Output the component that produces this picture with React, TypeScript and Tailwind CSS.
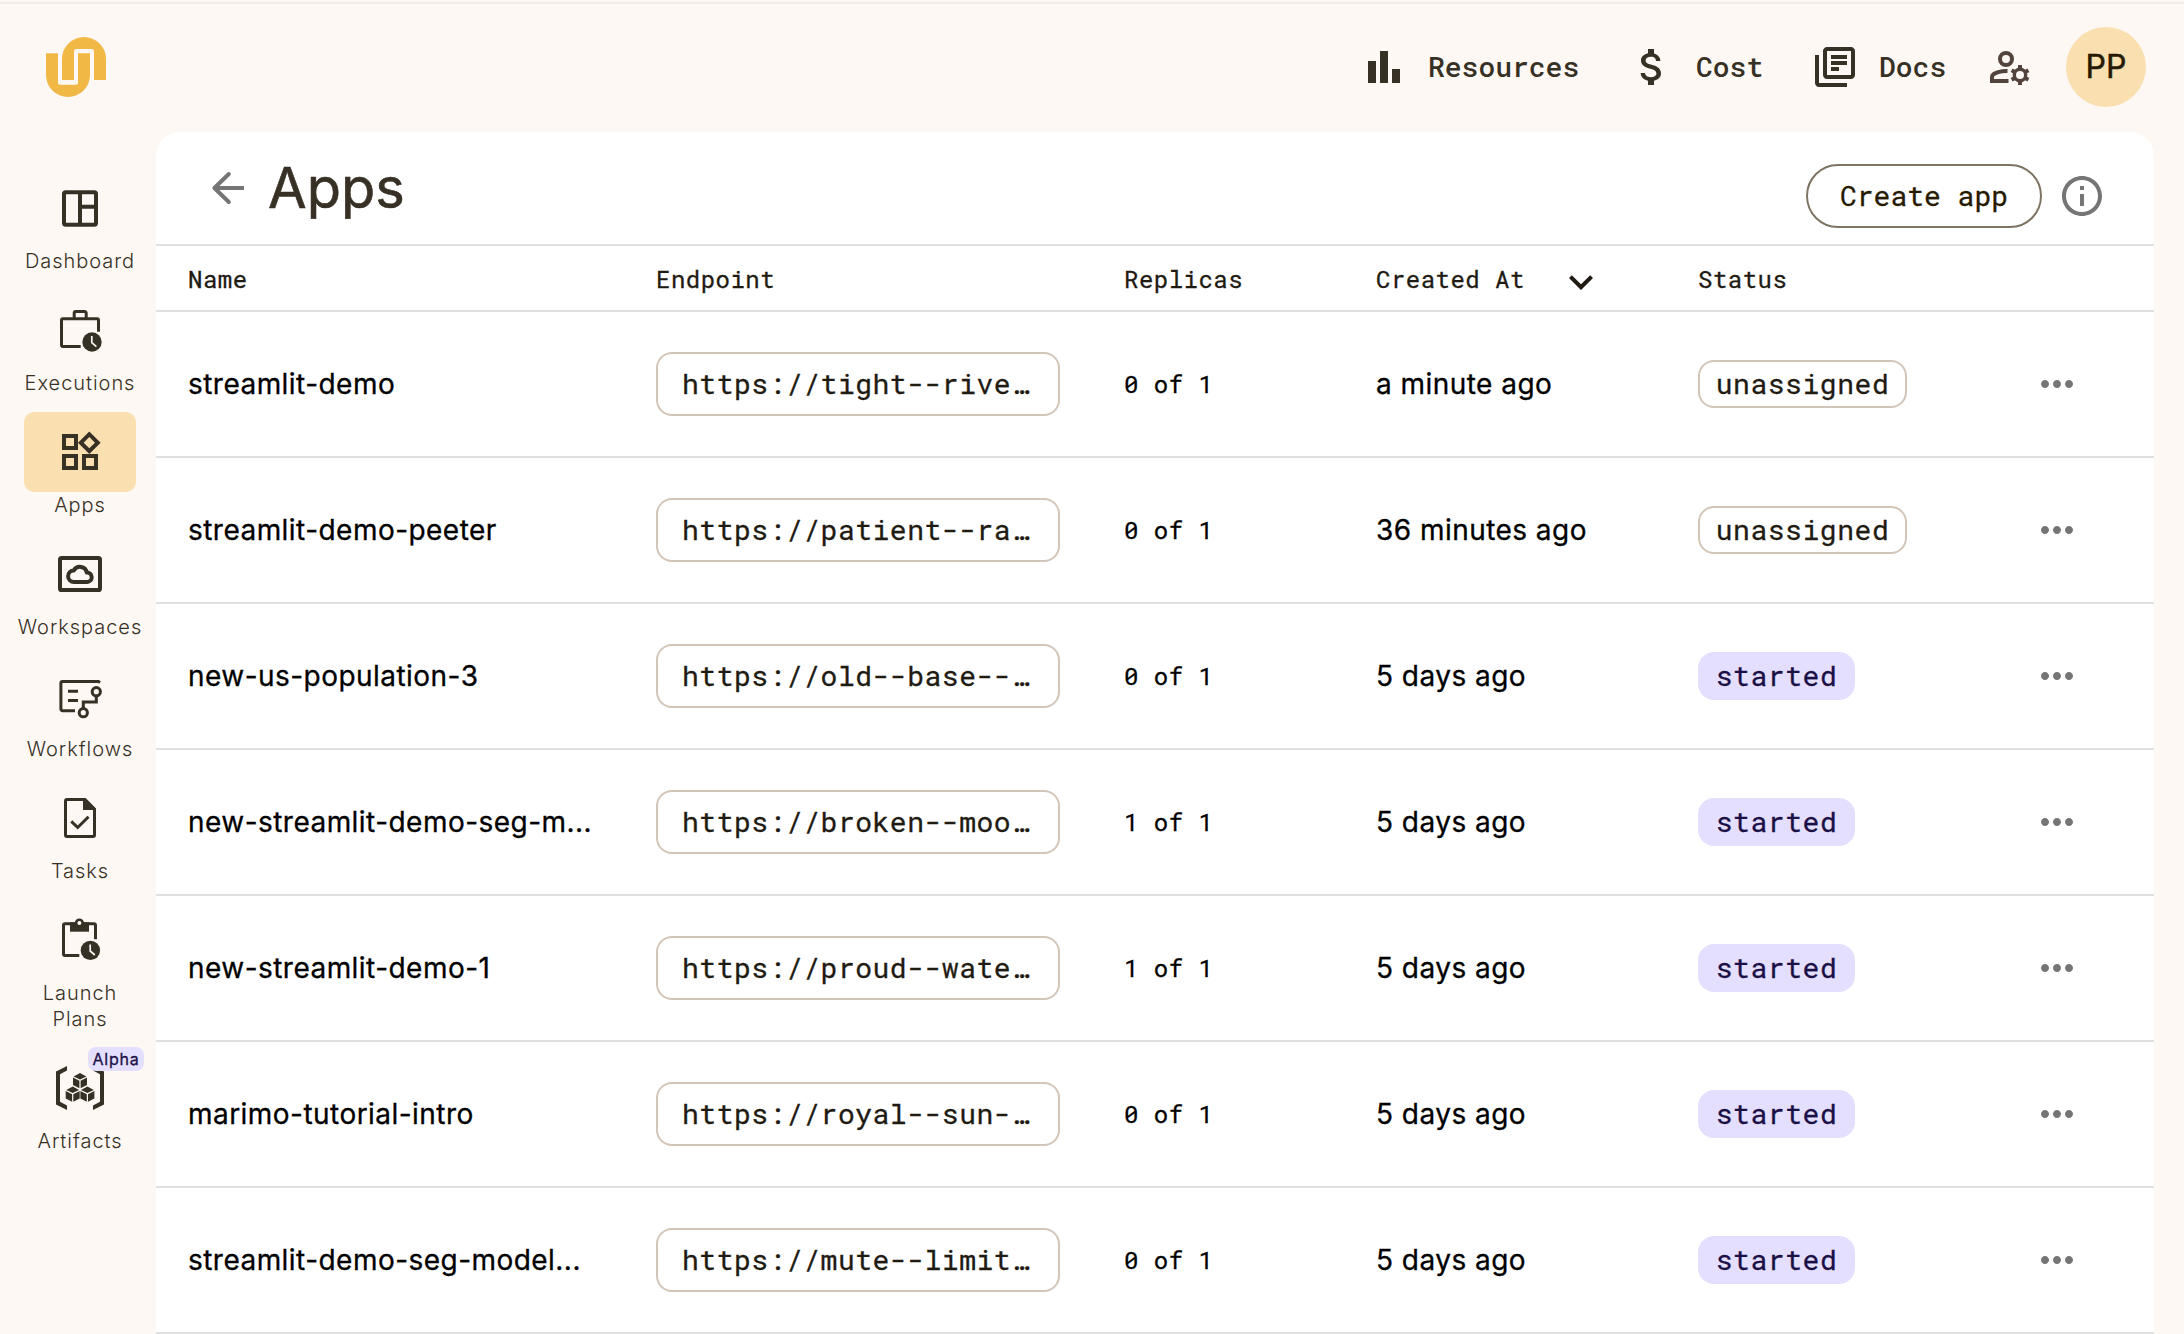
import React from "react";
import {
  MdAttachMoney,
  MdBarChart,
  MdExpandMore,
  MdMoreHoriz,
  MdOutlineInfo,
  MdOutlineLibraryBooks,
  MdOutlineWidgets,
} from "react-icons/md";

const MONO = "font-['Roboto_Mono','DejaVu_Sans_Mono',monospace]";
const INK = "#373025";

function Logo() {
  return (
    <svg className="h-[60px] w-[60px]" viewBox="0 0 60 60" fill="#f2b846">
      <path d="M0 16.3H12V45.7a2 2 0 0 0 2 2H30a2 2 0 0 0 2-2V16.3H44V38A22 22 0 0 1 0 38Z" />
      <path d="M16 43V22A22 22 0 0 1 60 22V43H48V14a2 2 0 0 0-2-2H30a2 2 0 0 0-2 2V43Z" />
    </svg>
  );
}

function NavSvg({ children }: { children: React.ReactNode }) {
  return (
    <svg className="h-12 w-12 overflow-visible" viewBox="0 0 48 48" fill="none" stroke={INK} strokeWidth="3">
      {children}
    </svg>
  );
}

function DashboardIcon() {
  return (
    <NavSvg>
      <g strokeWidth="4">
        <rect x="8" y="8.3" width="32" height="32.4" rx="1.6" />
        <path d="M24 8V40.5M24 22.7H40" />
      </g>
    </NavSvg>
  );
}

function Clock({ x, y }: { x: number; y: number }) {
  return (
    <g transform={`translate(${x} ${y})`}>
      <circle r="9.7" fill={INK} stroke="none" />
      <path d="M-.2-6V.6L4.4 4.6" stroke="#fef8f4" strokeWidth="1.7" />
    </g>
  );
}

function ExecutionsIcon() {
  return (
    <NavSvg>
      <path d="M42.5 25.7V14.3a1.5 1.5 0 0 0-1.5-1.5H7a1.5 1.5 0 0 0-1.5 1.5V39a1.5 1.5 0 0 0 1.5 1.5H24.7" />
      <path d="M18.2 12V7a1.5 1.5 0 0 1 1.5-1.5H28.7A1.5 1.5 0 0 1 30.2 7V12" />
      <Clock x={36} y={36} />
    </NavSvg>
  );
}

function WorkspacesIcon() {
  return (
    <NavSvg>
      <g strokeWidth="4">
        <rect x="4" y="8" width="40" height="32" rx="1.6" />
        <path d="M18 32a5.8 5.8 0 0 1-.2-11.6a7 7 0 0 1 13 2.2a4.7 4.7 0 0 1 .4 9.4z" strokeLinejoin="round" />
      </g>
    </NavSvg>
  );
}

function WorkflowsIcon() {
  return (
    <NavSvg>
      <path d="M44 10.6L42.6 9.6H6.5A1.6 1.6 0 0 0 4.9 11.2V37.1a1.6 1.6 0 0 0 1.6 1.6H19" />
      <path d="M12 19.3H22M12 28.5H22" />
      <circle cx="40.3" cy="19.7" r="4.1" />
      <circle cx="27.3" cy="40.7" r="4.1" />
      <path d="M40.3 24V30H27.3V36.6" />
    </NavSvg>
  );
}

function TasksIcon() {
  return (
    <NavSvg>
      <path d="M11 5.5H29L38.5 15V41a1.5 1.5 0 0 1-1.5 1.5H11A1.5 1.5 0 0 1 9.5 41V7A1.5 1.5 0 0 1 11 5.5Z" />
      <path d="M27 5H30L40 15V16H27Z" fill={INK} stroke="none" />
      <path d="M15.3 27.3L21.7 33.5L32.5 22.8" />
    </NavSvg>
  );
}

function LaunchPlansIcon() {
  return (
    <NavSvg>
      <path d="M39.5 23.3V9.3a1.5 1.5 0 0 0-1.5-1.5H9a1.5 1.5 0 0 0-1.5 1.5V38a1.5 1.5 0 0 0 1.5 1.5H23.3" />
      <path d="M14 6.3H33V15.7H14Z" fill={INK} stroke="none" />
      <circle cx="23.4" cy="7" r="3.3" fill="#fef8f4" strokeWidth="2.6" />
      <Clock x={34.4} y={34.4} />
    </NavSvg>
  );
}

function Cube({ x, y }: { x: number; y: number }) {
  return (
    <g transform={`translate(${x} ${y})`}>
      <path d="M0-7.7L6.4-4.3L0-1.1L-6.4-4.3Z" />
      <path d="M-7-3.2L-.6.1V7.6L-7 4.2Z" />
      <path d="M7-3.2L.6.1V7.6L7 4.2Z" />
    </g>
  );
}

function ArtifactsIcon() {
  return (
    <NavSvg>
      <g fill={INK} stroke="none">
        <path d="M0 7.4L11 2V6.6L4 10.3V37.7L11 41.4V46L0 40.4Z" />
        <path d="M48 7.4L37 2V6.6L44 10.3V37.7L37 41.4V46L48 40.4Z" />
        <Cube x={24} y={16.7} />
        <Cube x={16.7} y={30.2} />
        <Cube x={31.4} y={30.2} />
      </g>
    </NavSvg>
  );
}

function ManageAccountIcon() {
  return (
    <svg className="h-12 w-12" viewBox="0 0 48 48" fill="none" stroke="#52443c" strokeWidth="4">
      <circle cx="20" cy="16" r="6" />
      <path d="M21.5 28C14.5 27.7 9.7 29.8 7.4 31.3C6.4 32 6 33 6 34V38H22.5" />
      <circle cx="34" cy="32" r="5.7" strokeWidth="3.4" />
      <path
        d="M34 26V22M34 38V42M39.2 29L42.4 27.2M39.2 35L42.4 36.8M28.8 29L25.6 27.2M28.8 35L25.6 36.8"
        strokeWidth="4"
      />
    </svg>
  );
}

function BackArrow() {
  return (
    <svg className="h-12 w-12" viewBox="0 0 24 24" fill="none" stroke="#757575" strokeWidth="2">
      <path d="M20 12H5.5" />
      <path d="M12.4 5L5.2 12L12.4 19" strokeLinecap="round" strokeLinejoin="round" />
    </svg>
  );
}

const nav: { label: string; icon: React.ReactNode; active?: boolean; badge?: string }[] = [
  { label: "Dashboard", icon: <DashboardIcon /> },
  { label: "Executions", icon: <ExecutionsIcon /> },
  { label: "Apps", icon: <MdOutlineWidgets size={48} color={INK} />, active: true },
  { label: "Workspaces", icon: <WorkspacesIcon /> },
  { label: "Workflows", icon: <WorkflowsIcon /> },
  { label: "Tasks", icon: <TasksIcon /> },
  { label: "Launch Plans", icon: <LaunchPlansIcon /> },
  { label: "Artifacts", icon: <ArtifactsIcon />, badge: "Alpha" },
];

const rows = [
  ["streamlit-demo", "https://tight--rive…", "0 of 1", "a minute ago", "unassigned"],
  ["streamlit-demo-peeter", "https://patient--ra…", "0 of 1", "36 minutes ago", "unassigned"],
  ["new-us-population-3", "https://old--base--…", "0 of 1", "5 days ago", "started"],
  ["new-streamlit-demo-seg-m...", "https://broken--moo…", "1 of 1", "5 days ago", "started"],
  ["new-streamlit-demo-1", "https://proud--wate…", "1 of 1", "5 days ago", "started"],
  ["marimo-tutorial-intro", "https://royal--sun-…", "0 of 1", "5 days ago", "started"],
  ["streamlit-demo-seg-model...", "https://mute--limit…", "0 of 1", "5 days ago", "started"],
];

const GRID = "grid grid-cols-[468px_468px_252px_322px_1fr_194px] items-center pl-8";

function Sidebar() {
  return (
    <aside className="flex w-[156px] shrink-0 flex-col pr-1">
      <div className="flex h-[164px] items-start pt-[33px] pl-[46px]">
        <Logo />
      </div>
      <nav className="flex flex-col items-center gap-4 pl-2">
        {nav.map((item) => (
          <div key={item.label} className="relative flex w-[152px] flex-col items-center">
            <div className={`flex h-20 w-28 items-center justify-center rounded-[10px] ${item.active ? "bg-[#fadfb0]" : ""}`}>
              {item.icon}
            </div>
            <span
              className={`text-center text-[20px] leading-[26px] font-light tracking-[0.96px] text-[#373025] ${
                item.label === "Launch Plans" ? "w-24" : "whitespace-nowrap"
              }`}
            >
              {item.label}
            </span>
            {item.badge && (
              <span className="absolute top-[-1px] left-[84px] flex h-6 w-14 items-center justify-center rounded-lg bg-[#e5dfff] text-[16px] tracking-[0.8px] text-[#1a1046] [-webkit-text-stroke:0.3px]">
                {item.badge}
              </span>
            )}
          </div>
        ))}
      </nav>
    </aside>
  );
}

function TopBar() {
  return (
    <header className={`flex h-32 items-center justify-end pr-[38px] pb-0.5 text-[28px] font-medium text-[#373025] ${MONO}`}>
      <MdBarChart size={48} />
      <span className="ml-5 w-[200px]">Resources</span>
      <MdAttachMoney size={48} />
      <span className="ml-5 w-[115px]">Cost</span>
      <MdOutlineLibraryBooks size={48} />
      <span className="ml-5 w-[107px]">Docs</span>
      <ManageAccountIcon />
      <div className="ml-8 flex h-20 w-20 items-center justify-center rounded-full bg-[#fadfb0] font-['Inter',sans-serif] text-[32px] font-normal text-[#261a00] [-webkit-text-stroke:0.5px]">
        PP
      </div>
    </header>
  );
}

export default function App() {
  return (
    <div className="flex h-[1334px] w-[2184px] overflow-hidden border-t-2 border-[#fef8f4] bg-[#fef8f4] font-['Inter',sans-serif]">
      <div className="flex w-full border-t-2 border-[#f2ece8]">
        <Sidebar />
        <div className="flex min-w-0 flex-1 flex-col">
          <TopBar />
          <main className="mr-[30px] flex-1 overflow-hidden rounded-t-3xl bg-white [-webkit-text-stroke:0.3px]">
            <div className="flex h-28 items-center justify-between pr-12 pl-12">
              <div className="flex items-center">
                <BackArrow />
                <h1 className="ml-4 text-[56px] leading-none text-[#373025] [-webkit-text-stroke:0.6px]">Apps</h1>
              </div>
              <div className="flex items-center pt-4">
                <button className={`h-16 w-[236px] rounded-full border-2 border-[#7d7463] text-[28px] text-[#261a00] ${MONO}`}>
                  Create app
                </button>
                <MdOutlineInfo className="ml-4" size={48} color="#757575" />
              </div>
            </div>
            <div className={`h-[68px] border-y-2 border-[#e0e0e0] pt-0.5 text-[24px] tracking-[0.48px] text-[#1f1b13] ${GRID} ${MONO}`}>
              <span>Name</span>
              <span>Endpoint</span>
              <span>Replicas</span>
              <span className="flex items-center">
                <span className="w-[181px]">Created At</span>
                <MdExpandMore className="mt-1 -mb-0.5" size={48} />
              </span>
              <span>Status</span>
            </div>
            {rows.map(([name, url, replicas, created, status]) => (
              <div key={name} className={`h-[146px] border-b-2 border-[#e0e0e0] text-[28px] text-black ${GRID}`}>
                <span className="tracking-[0.46px] whitespace-nowrap">{name}</span>
                <span className={`flex h-16 w-[404px] items-center rounded-2xl border-2 border-[#d3c5b8] pl-6 tracking-[0.52px] text-[#1f1b13] ${MONO}`}>
                  {url}
                </span>
                <span className={`text-[24px] tracking-[0.48px] ${MONO}`}>{replicas}</span>
                <span className="tracking-[0.46px]">{created}</span>
                <span
                  className={`flex h-12 items-center justify-center justify-self-start rounded-2xl tracking-[0.56px] ${MONO} ${
                    status === "started"
                      ? "w-[157px] bg-[#e5dfff] text-[#1a1046]"
                      : "w-[209px] border-2 border-[#d3c5b8] text-[#1f1b13]"
                  }`}
                >
                  {status}
                </span>
                <MdMoreHoriz className="ml-[73px]" size={48} color="#757575" />
              </div>
            ))}
          </main>
        </div>
      </div>
    </div>
  );
}
